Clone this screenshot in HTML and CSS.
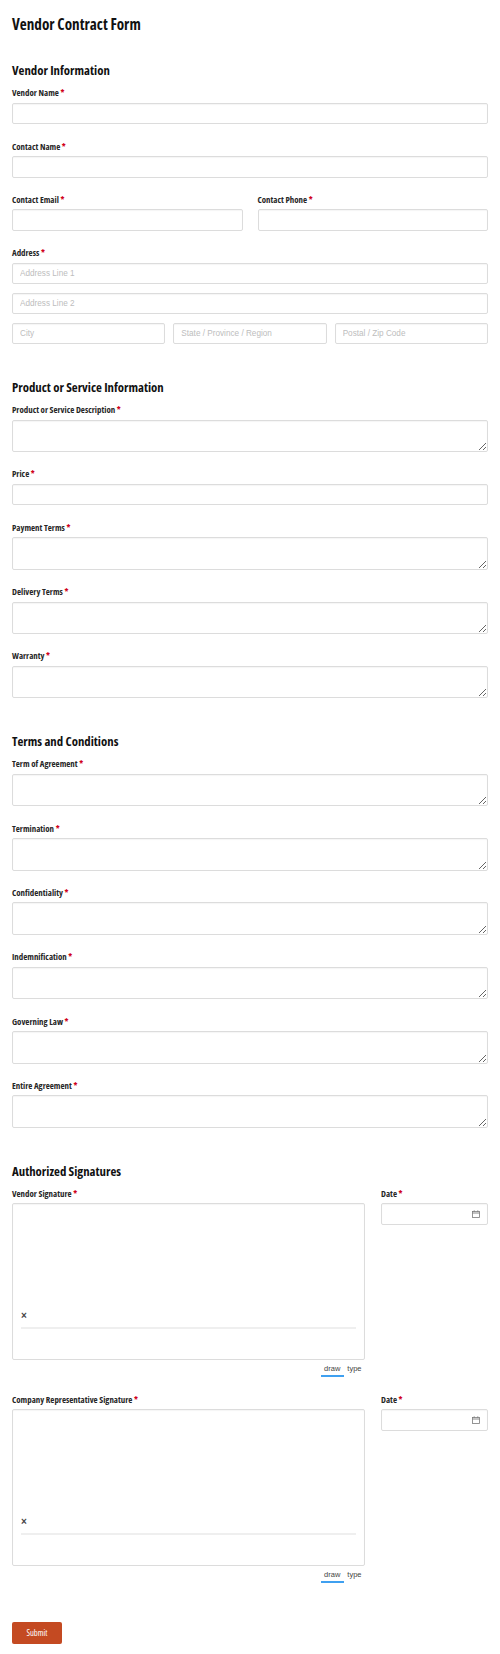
FILE: index.html
```html
<!DOCTYPE html>
<html lang="en">
<head>
    <meta charset="UTF-8">
    <meta name="viewport" content="width=device-width, initial-scale=1.0">
    <title>Vendor Contract Form</title>
    <link rel="stylesheet" href="styles.css">
</head>
<body>
    <div class="page">
        <h1 class="form-title">Vendor Contract Form</h1>

        <form class="form" onsubmit="return false;">
            <!-- Vendor information -->
            <section class="section">
                <h2 class="section-title">Vendor Information</h2>
                <div class="field">
                    <label class="label">Vendor Name <span class="req">*</span></label>
                    <input class="input" type="text">
                </div>
                <div class="field">
                    <label class="label">Contact Name <span class="req">*</span></label>
                    <input class="input" type="text">
                </div>
                <div class="row row-2">
                    <div class="field">
                        <label class="label">Contact Email <span class="req">*</span></label>
                        <input class="input" type="email">
                    </div>
                    <div class="field">
                        <label class="label">Contact Phone <span class="req">*</span></label>
                        <input class="input" type="tel">
                    </div>
                </div>
                <div class="field">
                    <label class="label">Address <span class="req">*</span></label>
                    <input class="input" type="text" placeholder="Address Line 1">
                    <input class="input addr-gap" type="text" placeholder="Address Line 2">
                    <div class="row row-3 addr-gap">
                        <input class="input" type="text" placeholder="City">
                        <input class="input" type="text" placeholder="State / Province / Region">
                        <input class="input" type="text" placeholder="Postal / Zip Code">
                    </div>
                </div>
            </section>

            <!-- Product or service -->
            <section class="section">
                <h2 class="section-title">Product or Service Information</h2>
                <div class="field">
                    <label class="label">Product or Service Description <span class="req">*</span></label>
                    <textarea class="input"></textarea>
                </div>
                <div class="field">
                    <label class="label">Price <span class="req">*</span></label>
                    <input class="input" type="text">
                </div>
                <div class="field">
                    <label class="label">Payment Terms <span class="req">*</span></label>
                    <textarea class="input"></textarea>
                </div>
                <div class="field">
                    <label class="label">Delivery Terms <span class="req">*</span></label>
                    <textarea class="input"></textarea>
                </div>
                <div class="field">
                    <label class="label">Warranty <span class="req">*</span></label>
                    <textarea class="input"></textarea>
                </div>
            </section>

            <!-- Terms -->
            <section class="section">
                <h2 class="section-title">Terms and Conditions</h2>
                <div class="field">
                    <label class="label">Term of Agreement <span class="req">*</span></label>
                    <textarea class="input"></textarea>
                </div>
                <div class="field">
                    <label class="label">Termination <span class="req">*</span></label>
                    <textarea class="input"></textarea>
                </div>
                <div class="field">
                    <label class="label">Confidentiality <span class="req">*</span></label>
                    <textarea class="input"></textarea>
                </div>
                <div class="field">
                    <label class="label">Indemnification <span class="req">*</span></label>
                    <textarea class="input"></textarea>
                </div>
                <div class="field">
                    <label class="label">Governing Law <span class="req">*</span></label>
                    <textarea class="input"></textarea>
                </div>
                <div class="field">
                    <label class="label">Entire Agreement <span class="req">*</span></label>
                    <textarea class="input"></textarea>
                </div>
            </section>

            <!-- Signatures -->
            <section class="section">
                <h2 class="section-title">Authorized Signatures</h2>
                <div class="row row-sig">
                    <div class="field">
                        <label class="label">Vendor Signature <span class="req">*</span></label>
                        <div class="sig-box">
                            <div class="sig-line"><span class="sig-x">&times;</span></div>
                        </div>
                        <div class="sig-tabs">
                            <span class="sig-tab active">draw</span>
                            <span class="sig-tab">type</span>
                        </div>
                    </div>
                    <div class="field">
                        <label class="label">Date <span class="req">*</span></label>
                        <div class="date-input">
                            <input type="text">
                            <svg class="cal-icon" width="8" height="8" viewBox="0 0 8 8">
                                <rect x="0.5" y="1.5" width="7" height="6" fill="none" stroke="#7a7a7a" stroke-width="0.8"/>
                                <line x1="0.5" y1="3" x2="7.5" y2="3" stroke="#7a7a7a" stroke-width="0.9"/>
                                <line x1="2.2" y1="0.3" x2="2.2" y2="1.8" stroke="#7a7a7a" stroke-width="0.8"/>
                                <line x1="5.8" y1="0.3" x2="5.8" y2="1.8" stroke="#7a7a7a" stroke-width="0.8"/>
                            </svg>
                        </div>
                    </div>
                </div>
                <div class="row row-sig">
                    <div class="field">
                        <label class="label">Company Representative Signature <span class="req">*</span></label>
                        <div class="sig-box">
                            <div class="sig-line"><span class="sig-x">&times;</span></div>
                        </div>
                        <div class="sig-tabs">
                            <span class="sig-tab active">draw</span>
                            <span class="sig-tab">type</span>
                        </div>
                    </div>
                    <div class="field">
                        <label class="label">Date <span class="req">*</span></label>
                        <div class="date-input">
                            <input type="text">
                            <svg class="cal-icon" width="8" height="8" viewBox="0 0 8 8">
                                <rect x="0.5" y="1.5" width="7" height="6" fill="none" stroke="#7a7a7a" stroke-width="0.8"/>
                                <line x1="0.5" y1="3" x2="7.5" y2="3" stroke="#7a7a7a" stroke-width="0.9"/>
                                <line x1="2.2" y1="0.3" x2="2.2" y2="1.8" stroke="#7a7a7a" stroke-width="0.8"/>
                                <line x1="5.8" y1="0.3" x2="5.8" y2="1.8" stroke="#7a7a7a" stroke-width="0.8"/>
                            </svg>
                        </div>
                    </div>
                </div>
            </section>

            <div class="actions">
                <button type="submit" class="submit">Submit</button>
            </div>
        </form>
    </div>
</body>
</html>
```

FILE: styles.css
```css
body {
    margin: 0;
    font-family: "Open Sans", "Liberation Sans Narrow", sans-serif;
    font-stretch: 75%;
    color: #222;
    background: #fff;
}
.page {
    padding: 14px 12px 20px;
}
.form-title {
    margin: 0 0 27px;
    font-size: 15.2px;
    line-height: 20px;
    font-weight: 700;
    color: #111;
}
/* margins collapse with the last field's 15.3px */
.section {
    margin-top: 33.7px;
}
.section:first-child {
    margin-top: 0;
}
.section-title {
    margin: 0 0 7.3px;
    font-size: 12.8px;
    line-height: 18px;
    font-weight: 700;
    color: #111;
}
.field {
    margin-bottom: 15.3px;
}
.label {
    display: block;
    margin-bottom: 2.5px;
    font-size: 8.9px;
    line-height: 14px;
    font-weight: 700;
    color: #262626;
}
.req {
    color: #d0021b;
}
.input {
    display: block;
    width: 100%;
    height: 21.5px;
    margin: 0;
    padding: 0 7px;
    box-sizing: border-box;
    border: 1px solid #dcdcdc;
    border-radius: 2px;
    box-shadow: inset 0 1px 1px rgba(0, 0, 0, 0.04);
    font-family: "Liberation Sans", Arial, sans-serif;
    font-stretch: normal;
    font-size: 8.2px;
    color: #333;
    background: #fff;
}
.input::placeholder {
    color: #bdbdbd;
}
textarea.input {
    height: 32.5px;
    padding: 4px 7px;
}
.addr-gap {
    margin-top: 8.5px;
}
.row {
    display: grid;
    align-items: start;
}
.row-2 {
    grid-template-columns: minmax(0, 1fr) minmax(0, 1fr);
    column-gap: 15px;
}
.row-3 {
    grid-template-columns: repeat(3, minmax(0, 1fr));
    column-gap: 8px;
}
.row-sig {
    grid-template-columns: 353px minmax(0, 1fr);
    column-gap: 16px;
}
.sig-box {
    display: flex;
    flex-direction: column;
    justify-content: flex-end;
    height: 156.5px;
    padding: 0 8px 30px;
    box-sizing: border-box;
    border: 1px solid #dcdcdc;
    border-radius: 2px;
    box-shadow: inset 0 1px 1px rgba(0, 0, 0, 0.04);
}
.sig-line {
    padding-bottom: 4.4px;
    border-bottom: 2px solid #efefef;
}
.sig-x {
    display: block;
    font-family: "Liberation Sans", Arial, sans-serif;
    font-stretch: normal;
    font-size: 10px;
    line-height: 12px;
    font-weight: 700;
    color: #444;
}
.sig-tabs {
    display: flex;
    justify-content: flex-end;
    padding-top: 3.4px;
}
.sig-tab {
    padding: 0 3.5px;
    border-bottom: 2px solid transparent;
    font-family: "Liberation Sans", Arial, sans-serif;
    font-stretch: normal;
    font-size: 7.5px;
    line-height: 12px;
    color: #444;
}
.sig-tab.active {
    border-bottom-color: #3fa0f0;
}
.date-input {
    display: flex;
    align-items: center;
    height: 21.5px;
    padding: 0 7px;
    box-sizing: border-box;
    border: 1px solid #dcdcdc;
    border-radius: 2px;
    box-shadow: inset 0 1px 1px rgba(0, 0, 0, 0.04);
}
.date-input input {
    flex: 1;
    width: 100%;
    min-width: 0;
    border: none;
    outline: none;
    padding: 0;
    font-size: 8.2px;
    background: transparent;
}
.cal-icon {
    flex-shrink: 0;
}
.actions {
    margin-top: 21px;
}
.submit {
    width: 50px;
    height: 22px;
    padding: 0;
    border: none;
    border-radius: 2px;
    background-color: #c44a22;
    color: #fff;
    font-family: "Open Sans", "Liberation Sans Narrow", sans-serif;
    font-stretch: 75%;
    font-size: 8.6px;
    cursor: pointer;
}
```
